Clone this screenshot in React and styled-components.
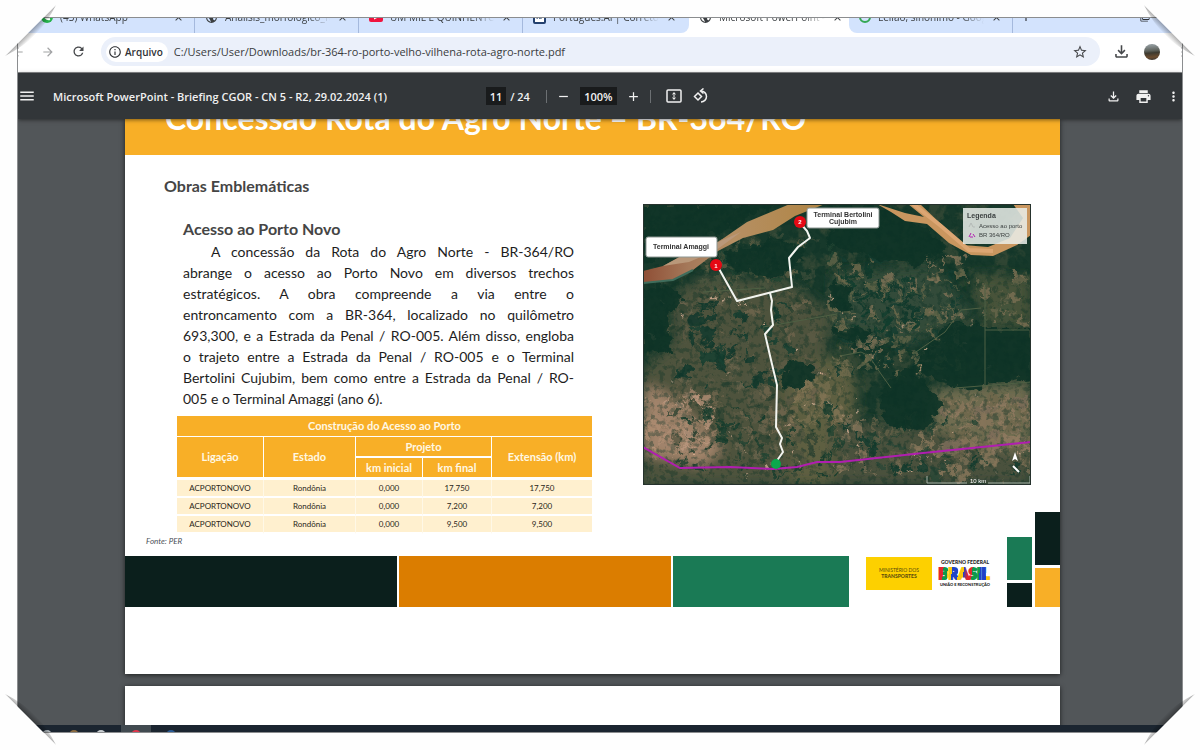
import React from 'react';
import styled, { createGlobalStyle } from 'styled-components';
import {
    MdArrowBack,
    MdArrowForward,
    MdRefresh,
    MdInfoOutline,
    MdStarOutline,
    MdOutlineFileDownload,
    MdMoreVert,
    MdMenu,
    MdRemove,
    MdAdd,
    MdPrint,
    MdPublic,
    MdClose,
    MdFilterNone,
} from 'react-icons/md';

const GlobalStyle = createGlobalStyle`
    * {
        box-sizing: border-box;
    }

    body {
        margin: 0;
        background: #fefefe;
        font-family: 'Open Sans', sans-serif;
    }

    button {
        display: inline-flex;
        align-items: center;
        justify-content: center;
        padding: 0;
        border: 0;
        background: none;
        color: inherit;
    }
`;

const Page = styled.div`
    position: relative;
    height: 100vh;
    padding: 17px;
    overflow: hidden;
`;

const Window = styled.div`
    display: flex;
    flex-direction: column;
    height: 100%;
    border: 1px solid #8b8d8f;
    overflow: hidden;
`;

/* folded photo corners over the window */
const Corner = styled.svg`
    position: absolute;
    width: 64px;
    height: 64px;
    top: ${props => props.$bottom ? 'auto' : 0};
    bottom: ${props => props.$bottom ? 0 : 'auto'};
    left: ${props => props.$right ? 'auto' : 0};
    right: ${props => props.$right ? 0 : 'auto'};
    transform: scale(${props => props.$right ? -1 : 1}, ${props => props.$bottom ? -1 : 1});
    pointer-events: none;
`;

const TabStrip = styled.div`
    display: flex;
    flex: none;
    height: 15px;
    background: #fff;
`;

const TabGroup = styled.div`
    display: flex;
    align-items: flex-end;
    flex: ${props => props.$grow ? '1 1 0' : 'none'};
    padding: ${props => props.$grow ? '0 32px 0 0' : '0 2px 0 13px'};
    background: #d3e3fd;
    border-radius: ${props => props.$grow ? '0 0 0 8px' : '0 0 8px 0'};
    overflow: hidden;
`;

const ActiveTab = styled.div`
    display: flex;
    align-items: flex-end;
    width: 160px;
    overflow: hidden;
`;

const Tab = styled.div`
    display: flex;
    align-items: center;
    flex: none;
    gap: 7px;
    width: 164px;
    height: 32px;
    padding: 0 10px;
    border-right: ${props => props.$line ? '1px solid #a5b9dd' : 'none'};
    color: #3c4043;
    font-size: 10px;

    svg {
        flex: none;
    }
`;

const TabTitle = styled.span`
    flex: 1;
    overflow: hidden;
    white-space: nowrap;
    mask-image: linear-gradient(90deg, #000 80%, transparent);
`;

const StripButton = styled.button`
    height: 32px;
    margin-left: ${props => props.$push ? 'auto' : '6px'};
    color: #30343a;
`;

const NavBar = styled.div`
    display: flex;
    align-items: center;
    flex: none;
    height: 40px;
    padding-bottom: 2px;
    border-bottom: 1px solid #8b8d8f;
    background: #fff;
    color: #46484b;
`;

const NavButton = styled.button`
    width: 30px;
    height: 30px;
    flex: none;
    opacity: ${props => props.$dim ? 0.5 : 1};
`;

const NavLeft = styled.div`
    display: flex;
    width: 83px;
    flex: none;
    justify-content: flex-end;
    padding-right: 8px;
`;

const Omnibox = styled.div`
    display: flex;
    align-items: center;
    gap: 6px;
    flex: 1;
    height: 29px;
    padding: 0 5px;
    border-radius: 15px;
    background: #ebf0fa;
`;

const FileChip = styled.button`
    && {
        gap: 3px;
        height: 20px;
        padding: 0 5px 0 2px;
        border-radius: 10px;
        background: #fff;
        color: #303236;
        font: 600 10px 'Open Sans', sans-serif;
    }
`;

const UrlInput = styled.input`
    flex: 1;
    min-width: 0;
    padding: 0;
    border: 0;
    outline: 0;
    background: none;
    color: #3a3c40;
    font: 11px 'Open Sans', sans-serif;
`;

const NavRight = styled.div`
    display: flex;
    align-items: center;
    width: 82px;
    flex: none;
    gap: 1px;
    padding-left: 6px;
`;

const Avatar = styled.span`
    width: 16px;
    height: 16px;
    margin: 0 7px;
    flex: none;
    border-radius: 50%;
    background: linear-gradient(175deg, #8f989b 10%, #5e625c 42%, #3d3a30 55%, #6b4c2f 80%, #333);
`;

const PdfBar = styled.div`
    position: relative;
    z-index: 1;
    display: grid;
    grid-template-columns: 1fr auto 1fr;
    align-items: center;
    flex: none;
    height: 46px;
    padding-right: 1px;
    background: #323639;
    box-shadow: 0 1px 4px rgba(0, 0, 0, 0.5);
    color: #f1f1f1;
    font-size: 11px;
`;

const PdfGroup = styled.div`
    display: flex;
    align-items: center;
    justify-content: ${props => props.$end ? 'flex-end' : 'flex-start'};
    gap: ${props => props.$gap}px;
`;

const PdfControls = styled(PdfGroup)`
    padding-right: 4px;
`;

const PdfTitle = styled.span`
    font-size: 11px;
    font-weight: 600;
    white-space: nowrap;
`;

const PdfInput = styled.input`
    width: ${props => props.$width}px;
    height: 18px;
    padding: 0;
    border: 0;
    background: #191b1c;
    color: #f1f1f1;
    font: 600 11px 'Open Sans', sans-serif;
    text-align: center;
`;

const PageCount = styled.span`
    margin: 0 7px 0 -5px;
    font-weight: 600;
`;

const PdfLine = styled.span`
    width: 1px;
    height: 13px;
    margin-right: ${props => props.$gap || 0}px;
    background: #6c7073;
`;

const Viewer = styled.main`
    flex: 1;
    min-height: 0;
    padding-right: 15px;
    background: #525659;
    overflow: hidden;
    font-family: Lato, sans-serif;
`;

const Slide = styled.section`
    max-width: 935px;
    margin: 0 auto 12px;
    padding-bottom: 67px;
    background: #fff;
    box-shadow: 0 1px 5px rgba(0, 0, 0, 0.65);
`;

const SlideHeader = styled.header`
    display: flex;
    align-items: flex-end;
    height: 36px;
    padding: 0 0 19px 40px;
    background: #f8af27;
    overflow: hidden;
`;

const SlideTitle = styled.h1`
    margin: 0;
    color: #fff;
    font-size: 32px;
    font-weight: 700;
    line-height: 36px;
    white-space: nowrap;
`;

const SlideBody = styled.div`
    display: flex;
    justify-content: space-between;
    padding: 20px 29px 0 0;
`;

const TextColumn = styled.div`
    flex: 0 1 467px;
`;

const Heading = styled.h2`
    margin: 0 0 ${props => props.$gap}px ${props => props.$indent}px;
    color: #454545;
    font-size: 16px;
    font-weight: 700;
    line-height: 22px;
`;

const Paragraph = styled.p`
    margin: 0 18px 7px 58px;
    color: #1d1d1d;
    font-size: 14px;
    line-height: 21px;
`;

const Line = styled.span`
    display: block;
    padding-left: ${props => props.$first ? 28 : 0}px;
    text-align: justify;
    text-align-last: ${props => props.$last ? 'left' : 'justify'};
    white-space: nowrap;
`;

const WorksTable = styled.table`
    width: 415px;
    margin-left: 52px;
    border-spacing: 0;
    table-layout: fixed;
    text-align: center;
`;

const HeadCell = styled.th`
    height: ${props => props.$line === 3 ? 22 : 21}px;
    padding: 0;
    border-right: ${props => props.$edge ? 0 : 1}px solid #fff;
    border-bottom: ${props => props.$line}px solid #fff;
    background: #f8af27;
    color: #fff8e4;
    font-size: 11px;
    font-weight: 700;
    line-height: 14px;
`;

const Cell = styled.td`
    height: 18px;
    padding: 0;
    border-right: ${props => props.$edge ? 0 : 1}px solid #fff8e6;
    border-bottom: 2px solid #fff;
    background: #fff0cf;
    color: #2b2619;
    font-size: 8px;
    line-height: 12px;
`;

const Source = styled.p`
    margin: 1px 0 0 21px;
    color: #4b4f58;
    font-size: 8px;
    font-style: italic;
    line-height: 12px;
`;

const MapFigure = styled.figure`
    flex: 0 1 388px;
    margin: 29px 0 0;

    svg {
        display: block;
        width: 100%;
    }
`;

const SlideFooter = styled.footer`
    display: flex;
    align-items: flex-end;
    height: 51px;
    margin-top: 9px;
`;

const Bar = styled.div`
    flex: ${props => props.$share} 1 0;
    height: 51px;
    margin-right: 2px;
    background: ${props => props.color};
`;

const Logos = styled.div`
    display: flex;
    gap: 6px;
    height: 51px;
    padding: 1px 15px 0;
`;

const MinistryLogo = styled.div`
    width: 66px;
    height: 33px;
    padding-top: 10px;
    background: #fdd000;
    color: #5b4d0c;
    font-size: 5px;
    line-height: 6px;
    text-align: center;

    strong {
        display: block;
        font-weight: 900;
    }
`;

const BlockColumn = styled.div`
    display: flex;
    flex-direction: column;
    gap: 3px;
    width: 25px;
    margin-left: ${props => props.$gap}px;
`;

const Block = styled.div`
    height: ${props => props.$height}px;
    background: ${props => props.color};
`;

const Taskbar = styled.div`
    display: flex;
    gap: 13px;
    flex: none;
    height: 7px;
    padding-left: 22px;
    background: #1b2530;
    overflow: hidden;
`;

const TaskItem = styled.span`
    display: flex;
    justify-content: center;
    width: ${props => props.$open ? 30 : 14}px;
    padding-top: 5px;
    background: ${props => props.$open ? '#414a50' : 'none'};

    &::before {
        content: '';
        flex: none;
        width: 10px;
        height: 10px;
        border-radius: 50%;
        background: ${props => props.color};
    }
`;

const WORKS = [
    ['ACPORTONOVO', 'Rondônia', '0,000', '17,750', '17,750'],
    ['ACPORTONOVO', 'Rondônia', '0,000', '7,200', '7,200'],
    ['ACPORTONOVO', 'Rondônia', '0,000', '9,500', '9,500'],
];

const LINES = [
    'A concessão da Rota do Agro Norte - BR-364/RO',
    'abrange o acesso ao Porto Novo em diversos trechos',
    'estratégicos. A obra compreende a via entre o',
    'entroncamento com a BR-364, localizado no quilômetro',
    '693,300, e a Estrada da Penal / RO-005. Além disso, engloba',
    'o trajeto entre a Estrada da Penal / RO-005 e o Terminal',
    'Bertolini Cujubim, bem como entre a Estrada da Penal / RO-',
    '005 e o Terminal Amaggi (ano 6).',
];

// small deterministic generator so the fields stay in the same place
const makeRandom = seed => () => {
    seed = (seed * 16807) % 2147483647;
    return seed / 2147483647;
};

const scatter = (seed, count, [x, y, w, h], max, colors) => {
    const rand = makeRandom(seed);
    return Array.from({ length: count }, () => {
        const cx = x + rand() * w;
        const cy = y + rand() * h;
        const a = 1 + rand() * max;
        const b = 1 + rand() * max;
        return {
            points: `${cx - a},${cy - b * 0.6} ${cx + a * 0.7},${cy - b} ${cx + a},${cy + b * 0.5} ${cx - a * 0.5},${cy + b}`,
            fill: colors[Math.floor(rand() * colors.length)],
        };
    });
};

// open land under the fields, drawn soft
const GROUND = [
    { points: '30,95 60,72 150,80 190,110 180,160 190,281 0,281 0,165 30,140', fill: '#414a36' },
    { points: '0,180 25,190 50,215 80,245 60,262 0,250', fill: '#84735c' },
    { points: '140,165 200,150 215,185 200,281 150,281', fill: '#4d5239' },
    { points: '292,184 388,178 388,250 284,254', fill: '#5c5e45' },
    { points: '190,70 290,60 330,110 270,140 190,125', fill: '#2c4230' },
    { points: '190,215 290,225 388,255 388,281 190,281', fill: '#3e4734' },
    { points: '330,70 388,75 388,124 342,122', fill: '#3a4832' },
];

const FIELDS = [
    ...scatter(17, 170, [28, 85, 145, 170], 6, ['#424a36', '#4b4f3b', '#555641', '#2a3d2d', '#5b5842']),
    ...scatter(29, 80, [60, 30, 130, 60], 5, ['#2e4230', '#3d4a36', '#1b3c2c', '#4a5038']),
    ...scatter(41, 190, [188, 52, 130, 118], 5, ['#4c563d', '#5a5d42', '#12362a', '#66634a']),
    ...scatter(53, 50, [195, 65, 80, 60], 4, ['#0e3327', '#0f3628']),
    ...scatter(67, 110, [200, 215, 188, 60], 7, ['#50533d', '#625f48', '#24402f', '#6f674e', '#103528']),
    ...scatter(71, 80, [302, 194, 86, 52], 7, ['#6d664d', '#756b54', '#5b5b42', '#655f4c']),
    ...scatter(83, 70, [4, 190, 68, 60], 5, ['#83735c', '#8d7a62', '#786b54', '#96826b']),
    ...scatter(97, 30, [150, 170, 50, 50], 8, ['#6a6549', '#5f5f43', '#5a593f']),
    ...scatter(101, 30, [335, 70, 50, 50], 5, ['#54583f', '#636046', '#384a34']),
    ...scatter(113, 40, [40, 100, 110, 80], 7, ['#0f3327', '#13382a']),
    ...scatter(127, 50, [40, 200, 160, 80], 5, ['#153728', '#1d3c2b']),
    ...scatter(131, 60, [10, 90, 370, 185], 1, ['#a3937a', '#8d8067', '#b39b80']),
];

const FOREST = [
    '0,0 135,0 100,18 40,44 0,62',
    '0,82 28,80 44,96 26,112 30,148 0,150',
    '80,50 140,34 162,48 140,72 96,66',
    '188,0 234,0 276,22 306,48 268,62 222,54 186,40',
    '190,78 208,86 206,104 186,102',
    '285,140 305,120 330,118 342,126 388,126 388,175 318,184 294,180 272,156',
    '244,174 272,160 284,180 302,202 288,212 280,228 250,226 236,206',
    '190,122 232,126 222,138 196,136',
    '136,172 150,158 172,166 164,180 140,184',
];

function AccessMap() {
    return (
        <svg viewBox="0 0 388 281" role="img" aria-label="Mapa do acesso ao porto">
            <defs>
                <filter id="cover" x="0" y="0" width="1" height="1" colorInterpolationFilters="sRGB">
                    <feTurbulence type="fractalNoise" baseFrequency="0.06" numOctaves="5" seed="8" />
                    <feColorMatrix values="0 0 0 0 0.33  0 0 0 0 0.35  0 0 0 0 0.25  7 0 0 0 -3.5" />
                </filter>
                <filter id="grain" x="0" y="0" width="1" height="1" colorInterpolationFilters="sRGB">
                    <feTurbulence type="fractalNoise" baseFrequency="0.18" numOctaves="4" seed="3" />
                    <feColorMatrix values="0 0 0 0 0.05  0 0 0 0 0.2  0 0 0 0 0.15  6 0 0 0 -3" />
                </filter>
                <filter id="ragged" x="-5%" y="-5%" width="110%" height="110%" colorInterpolationFilters="sRGB">
                    <feTurbulence type="fractalNoise" baseFrequency="0.09" numOctaves="4" seed="5" />
                    <feDisplacementMap in="SourceGraphic" scale="18" xChannelSelector="R" yChannelSelector="G" />
                </filter>
                <filter id="soft" x="-5%" y="-5%" width="110%" height="110%">
                    <feGaussianBlur stdDeviation="6" />
                </filter>
                <filter id="lift" x="0" y="0" width="1" height="1" colorInterpolationFilters="sRGB">
                    <feColorMatrix values="1.22 0 0 0 0  0 1.14 0 0 0  0 0 1.16 0 0  0 0 0 1 0" />
                </filter>
                <linearGradient id="river">
                    <stop offset="0" stopColor="#8f4f36" />
                    <stop offset="0.25" stopColor="#a5795a" />
                    <stop offset="0.5" stopColor="#b58f63" />
                    <stop offset="1" stopColor="#b08543" />
                </linearGradient>
                <clipPath id="frame"><rect width="388" height="281" /></clipPath>
            </defs>

            <g clipPath="url(#frame)">
                <rect width="388" height="281" fill="#17392b" />
                <rect width="388" height="281" filter="url(#cover)" opacity="0.4" />
                <g filter="url(#lift)">
                    <g filter="url(#soft)">
                        {GROUND.map(area => <polygon key={area.points} {...area} />)}
                    </g>
                    <g filter="url(#ragged)">
                        {FIELDS.map((field, i) => <polygon key={i} {...field} opacity="0.85" />)}
                    </g>
                </g>
                <g filter="url(#ragged)" fill="#0f3427">
                    {FOREST.map(points => <polygon key={points} points={points} opacity="0.92" />)}
                </g>
                <rect width="388" height="281" filter="url(#grain)" opacity="0.35" />

                <path d="M0 67L20 62L42 50L75 38L104 18L147 0H182L152 12L130 26L100 34L75 47L50 66L30 76L0 79Z" fill="url(#river)" />
                <path d="M20 62L42 50L75 38L98 28L72 47L46 58Z" fill="#b9987a" />
                <path d="M0 79L30 76L50 66" fill="none" stroke="#3f6d5c" strokeWidth="2" />
                <path d="M234 0L262 9L281 13L265 0H277L297 19L320 41L345 43L367 34L380 14L370 0H388V31L374 41L350 52L328 51L306 39L284 20L262 17L248 8Z" fill="#c9965f" />
                <path d="M270 0L298 22L326 46L350 47" fill="none" stroke="#dca673" strokeWidth="4" />

                <g fill="none" stroke="#4f6044">
                    <path d="M342 80V184M270 150L302 128L318 106L338 104M197 152L218 148L226 152L238 170L248 184" />
                    <path d="M312 184L388 178M120 123L194 110" />
                    <path d="M342 126H386M60 88L122 84" />
                </g>

                <path d="M0 243L37 264L87 263L130 265L154 263L174 258L197 258L280 249L388 238" fill="none" stroke="#b01eb0" strokeWidth="2" />
                <g fill="none" stroke="#f3f5f0" strokeWidth="2" strokeLinejoin="round">
                    <path d="M75 63L94 97L149 83L146 54L155 43L167 34L164 27L158 20" />
                    <path d="M127 89L129 97L128 106L130 121L122 130L128 156L134 181L133 223L139 234L137 240L140 248L133 258" />
                </g>
                <circle cx="133" cy="260" r="5" fill="#0ba84c" />

                <g fill="#e50914">
                    <circle cx="73" cy="61" r="6" />
                    <circle cx="157" cy="18" r="6" />
                </g>
                <g fill="#fff" stroke="#8d9692">
                    <rect x="3" y="33" width="71" height="20" rx="2" />
                    <rect x="164" y="4" width="72" height="20" rx="2" />
                </g>
                <rect x="320" y="4" width="64" height="36" fill="#e9eee9" opacity="0.86" />
                <g fontFamily="Liberation Sans, Arial, sans-serif" fontSize="6" fill="#3a3f3f">
                    <g fontWeight="700" fill="#fff" textAnchor="middle">
                        <text x="73" y="64">1</text>
                        <text x="157" y="20">2</text>
                    </g>
                    <g fontWeight="700" fontSize="7" textAnchor="middle" fill="#333">
                        <text x="38" y="45">Terminal Amaggi</text>
                        <text x="200" y="13">Terminal Bertolini</text>
                        <text x="200" y="20">Cujubim</text>
                    </g>
                    <text x="324" y="14" fontSize="7" fontWeight="700">Legenda</text>
                    <text x="336" y="24">Acesso ao porto</text>
                    <text x="336" y="33">BR 364/RO</text>
                    <text x="327" y="279" fill="#fff">10 km</text>
                </g>
                <path d="M326 23L328 19L330 23H332" fill="none" stroke="#b5bab7" />
                <path d="M326 33L328 29M330 30L332 33M327 33H330" fill="none" stroke="#b01eb0" strokeWidth="1" />
                <path d="M372 248L375 257L372 255L369 257Z" fill="#fff" />
                <path d="M370 262L376 268" stroke="#fff" strokeWidth="2" />
                <path d="M284 272V279H324M345 279H387V272" fill="none" stroke="#aab2a8" />
            </g>
            <rect x="0.5" y="0.5" width="387" height="280" fill="none" stroke="#26322d" />
        </svg>
    );
}

function BrasilLogo() {
    return (
        <svg width="53" height="32" viewBox="0 0 53 32" role="img" aria-label="Brasil">
            <defs>
                <linearGradient id="brasil" gradientUnits="userSpaceOnUse" x1="0" y1="3" x2="53" y2="9">
                    <stop offset="0.12" stopColor="#e3262e" />
                    <stop offset="0.12" stopColor="#10994a" />
                    <stop offset="0.2" stopColor="#10994a" />
                    <stop offset="0.2" stopColor="#f9c80e" />
                    <stop offset="0.28" stopColor="#f9c80e" />
                    <stop offset="0.28" stopColor="#2243c6" />
                    <stop offset="0.4" stopColor="#2243c6" />
                    <stop offset="0.4" stopColor="#f9c80e" />
                    <stop offset="0.5" stopColor="#f9c80e" />
                    <stop offset="0.5" stopColor="#2243c6" />
                    <stop offset="0.58" stopColor="#e3262e" />
                    <stop offset="0.66" stopColor="#e3262e" />
                    <stop offset="0.66" stopColor="#10994a" />
                    <stop offset="0.8" stopColor="#10994a" />
                    <stop offset="0.8" stopColor="#2243c6" />
                    <stop offset="0.93" stopColor="#2243c6" />
                    <stop offset="0.93" stopColor="#f9c80e" />
                </linearGradient>
            </defs>
            <g fontFamily="Lato, sans-serif" fontWeight="900" textAnchor="middle" fill="#1d1d22">
                <text x="27" y="7" fontSize="5">GOVERNO FEDERAL</text>
                <text x="26" y="22" fontSize="15" fill="url(#brasil)" stroke="url(#brasil)" strokeWidth="2">BRASIL</text>
                <text x="27" y="29" fontSize="4">UNIÃO E RECONSTRUÇÃO</text>
            </g>
        </svg>
    );
}

const PhotoCorner = ({ bottom, right }) => (
    <Corner $bottom={bottom} $right={right} viewBox="0 0 64 64" aria-hidden="true">
        <defs>
            <linearGradient id={`fold${bottom ? 1 : 0}${right ? 1 : 0}`} gradientUnits="userSpaceOnUse" x1="30" y1="30" x2="35" y2="35">
                <stop offset="0" stopColor="#000" stopOpacity="0.35" />
                <stop offset="1" stopColor="#000" stopOpacity="0" />
            </linearGradient>
        </defs>
        <path d="M5 56L56 5Q47 23 35 35Q23 47 5 56Z" fill={`url(#fold${bottom ? 1 : 0}${right ? 1 : 0})`} />
        <path d="M0 0H61L0 61Z" fill="#fefefe" />
    </Corner>
);

const WhatsAppIcon = () => (
    <svg width="12" height="12" viewBox="0 0 12 12">
        <circle cx="6" cy="6" r="6" fill="#25b34b" />
        <path d="M3 4Q5 9 9 8" fill="none" stroke="#fff" strokeWidth="2" />
    </svg>
);

const YoutubeIcon = () => (
    <svg width="14" height="12" viewBox="0 0 14 12">
        <rect y="1" width="14" height="10" rx="2" fill="#f0133e" />
        <path d="M5 3.500L10 6L5 8.500Z" fill="#fff" />
    </svg>
);

const TextIcon = () => (
    <svg width="13" height="13" viewBox="0 0 13 13">
        <rect x="1" y="1" width="11" height="11" rx="1" fill="#fff" stroke="#23406e" strokeWidth="2" />
        <path d="M4 8L5 4L7 8M8 4V8" fill="none" stroke="#23406e" />
    </svg>
);

const GoogleIcon = () => (
    <svg width="12" height="12" viewBox="0 0 12 12" fill="none" strokeWidth="2">
        <circle cx="6" cy="6" r="5" stroke="#34a853" />
        <path d="M1 6A5 5 0 0 1 9 2" stroke="#ea4335" />
        <path d="M6 6H11" stroke="#4285f4" />
    </svg>
);

const FitIcon = () => (
    <svg width="16" height="14" viewBox="0 0 16 14">
        <rect x="1" y="1" width="14" height="12" rx="1" fill="none" stroke="currentColor" strokeWidth="1.500" />
        <path d="M8 3L10 5.500H6ZM8 11L10 8.500H6Z" fill="currentColor" />
        <path d="M7 7H9" stroke="currentColor" />
    </svg>
);

const RotateIcon = () => (
    <svg width="16" height="16" viewBox="0 0 16 16" fill="none" stroke="currentColor" strokeWidth="1.500">
        <path d="M5 5L8.500 8.500L5 12L1.500 8.500Z" />
        <path d="M8 3A5.500 5.500 0 1 1 8 14" />
        <path d="M10.500 0.500L7.500 3L10.500 5.500" />
    </svg>
);

const BrowserTab = ({ icon, title, line }) => (
    <Tab $line={line}>
        {icon}
        <TabTitle>{title}</TabTitle>
        <MdClose size={11} />
    </Tab>
);

export default function App() {
    return (
        <Page>
            <GlobalStyle />
            <Window>
                <TabStrip>
                    <TabGroup>
                        <BrowserTab icon={<WhatsAppIcon />} title="(43) WhatsApp" line />
                        <BrowserTab icon={<MdPublic size={13} />} title="Análisis_morfológico_fe" line />
                        <BrowserTab icon={<YoutubeIcon />} title="UM MIL E QUINHENTOS" line />
                        <BrowserTab icon={<TextIcon />} title="Português.AI | Corretor" />
                    </TabGroup>
                    <ActiveTab>
                        <BrowserTab icon={<MdPublic size={13} />} title="Microsoft PowerPoint - B" />
                    </ActiveTab>
                    <TabGroup $grow>
                        <BrowserTab icon={<GoogleIcon />} title="Leilão, sinônimo - Goog" line />
                        <StripButton aria-label="Nova guia"><MdAdd size={14} /></StripButton>
                        <StripButton $push aria-label="Restaurar"><MdFilterNone size={10} /></StripButton>
                    </TabGroup>
                </TabStrip>

                <NavBar>
                    <NavLeft>
                        <NavButton $dim aria-label="Voltar"><MdArrowBack size={14} /></NavButton>
                        <NavButton $dim aria-label="Avançar"><MdArrowForward size={14} /></NavButton>
                        <NavButton aria-label="Recarregar"><MdRefresh size={15} /></NavButton>
                    </NavLeft>
                    <Omnibox>
                        <FileChip><MdInfoOutline size={14} />Arquivo</FileChip>
                        <UrlInput
                            aria-label="Endereço"
                            defaultValue="C:/Users/User/Downloads/br-364-ro-porto-velho-vilhena-rota-agro-norte.pdf"
                        />
                        <NavButton aria-label="Favoritar"><MdStarOutline size={16} /></NavButton>
                    </Omnibox>
                    <NavRight>
                        <NavButton aria-label="Downloads"><MdOutlineFileDownload size={19} /></NavButton>
                        <Avatar />
                        <NavButton aria-label="Menu"><MdMoreVert size={16} /></NavButton>
                    </NavRight>
                </NavBar>

                <PdfBar>
                    <PdfGroup $gap={17}>
                        <button aria-label="Menu lateral"><MdMenu size={18} /></button>
                        <PdfTitle>Microsoft PowerPoint - Briefing CGOR - CN 5 - R2, 29.02.2024 (1)</PdfTitle>
                    </PdfGroup>
                    <PdfControls $gap={9}>
                        <PdfInput $width={20} defaultValue="11" aria-label="Página" />
                        <PageCount>/ 24</PageCount>
                        <PdfLine />
                        <button aria-label="Diminuir zoom"><MdRemove size={15} /></button>
                        <PdfInput $width={37} defaultValue="100%" aria-label="Zoom" />
                        <button aria-label="Aumentar zoom"><MdAdd size={15} /></button>
                        <PdfLine $gap={6} />
                        <PdfGroup $gap={11}>
                            <button aria-label="Ajustar à página"><FitIcon /></button>
                            <button aria-label="Girar"><RotateIcon /></button>
                        </PdfGroup>
                    </PdfControls>
                    <PdfGroup $gap={14} $end>
                        <button aria-label="Baixar"><MdOutlineFileDownload size={15} /></button>
                        <button aria-label="Imprimir"><MdPrint size={17} /></button>
                        <button aria-label="Mais"><MdMoreVert size={15} /></button>
                    </PdfGroup>
                </PdfBar>

                <Viewer>
                    <Slide>
                        <SlideHeader>
                            <SlideTitle>Concessão Rota do Agro Norte – BR-364/RO</SlideTitle>
                        </SlideHeader>
                        <SlideBody>
                            <TextColumn>
                                <Heading $indent={39} $gap={21}>Obras Emblemáticas</Heading>
                                <Heading $indent={58} $gap={1}>Acesso ao Porto Novo</Heading>
                                <Paragraph>
                                    {LINES.map((line, i) => (
                                        <Line key={line} $first={i === 0} $last={i === LINES.length - 1}>{line}</Line>
                                    ))}
                                </Paragraph>
                                <WorksTable>
                                    <colgroup>
                                        <col width="87" />
                                        <col width="92" />
                                        <col width="67" />
                                        <col width="69" />
                                        <col width="100" />
                                    </colgroup>
                                    <thead>
                                        <tr>
                                            <HeadCell colSpan={5} $line={1} $edge>Construção do Acesso ao Porto</HeadCell>
                                        </tr>
                                        <tr>
                                            <HeadCell rowSpan={2} $line={3}>Ligação</HeadCell>
                                            <HeadCell rowSpan={2} $line={3}>Estado</HeadCell>
                                            <HeadCell colSpan={2} $line={2}>Projeto</HeadCell>
                                            <HeadCell rowSpan={2} $line={3} $edge>Extensão (km)</HeadCell>
                                        </tr>
                                        <tr>
                                            <HeadCell $line={3}>km inicial</HeadCell>
                                            <HeadCell $line={3}>km final</HeadCell>
                                        </tr>
                                    </thead>
                                    <tbody>
                                        {WORKS.map((row, i) => (
                                            <tr key={i}>
                                                {row.map((value, j) => <Cell key={j} $edge={j === 4}>{value}</Cell>)}
                                            </tr>
                                        ))}
                                    </tbody>
                                </WorksTable>
                                <Source>Fonte: PER</Source>
                            </TextColumn>
                            <MapFigure><AccessMap /></MapFigure>
                        </SlideBody>
                        <SlideFooter>
                            <Bar $share={272} color="#0b1f1c" />
                            <Bar $share={272} color="#db7d00" />
                            <Bar $share={176} color="#1a7a55" />
                            <Logos>
                                <MinistryLogo>MINISTÉRIO DOS<strong>TRANSPORTES</strong></MinistryLogo>
                                <BrasilLogo />
                            </Logos>
                            <BlockColumn $gap={1}>
                                <Block $height={43} color="#1a7a55" />
                                <Block $height={24} color="#0b1f1c" />
                            </BlockColumn>
                            <BlockColumn $gap={3}>
                                <Block $height={53} color="#0b1f1c" />
                                <Block $height={39} color="#f8af27" />
                            </BlockColumn>
                        </SlideFooter>
                    </Slide>
                    <Slide />
                </Viewer>

                <Taskbar>
                    <TaskItem color="#aeb6bb" />
                    <TaskItem color="#8a6a40" />
                    <TaskItem color="#c9ced2" />
                    <TaskItem $open color="#e0364c" />
                    <TaskItem color="#2a5a94" />
                </Taskbar>
            </Window>
            <PhotoCorner />
            <PhotoCorner right />
            <PhotoCorner bottom />
            <PhotoCorner bottom right />
        </Page>
    );
}
